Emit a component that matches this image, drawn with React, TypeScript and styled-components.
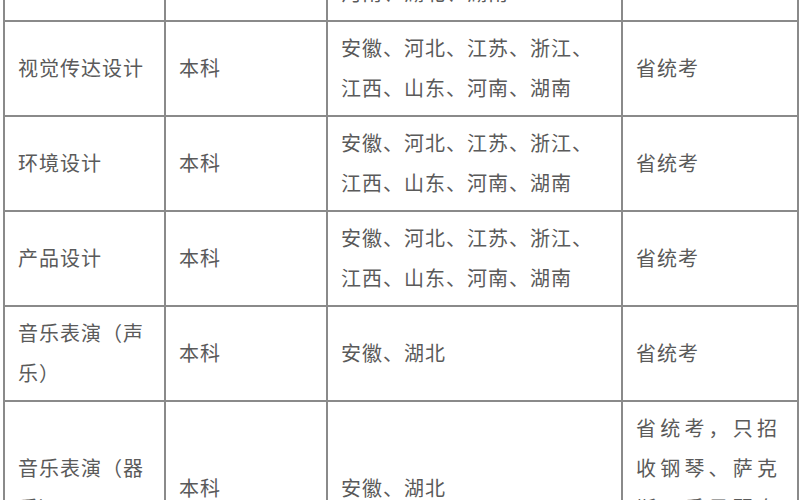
import React from "react";
import styled, { createGlobalStyle } from "styled-components";

const GlobalStyle = createGlobalStyle`
  html, body {
    margin: 0;
    padding: 0;
    background: #ffffff;
    overflow: hidden;
  }
  body {
    font-family: "Noto Sans CJK SC", "Noto Sans", sans-serif;
  }
`;

const Page = styled.div`
  width: 800px;
  height: 500px;
  overflow: hidden;
  padding-left: 3px;
  box-sizing: border-box;
`;

const Table = styled.table`
  border-collapse: collapse;
  table-layout: fixed;
  width: 794px;
  margin-top: -75px;
  color: #5a5a5a;
  font-size: 20px;
  letter-spacing: 1px;
`;

const Cell = styled.td<{ $wide?: boolean }>`
  border: 2px solid #8a8a8a;
  padding: 6px 13px 7px;
  vertical-align: middle;
  line-height: 40px;
  white-space: nowrap;
  letter-spacing: ${props => (props.$wide ? "4.2px" : "1px")};
`;

const Line = styled.div`
  display: block;
`;

type Row = {
  major: string[];
  level: string;
  provinces: string[];
  note: string[];
  wideNote?: boolean;
};

const ROWS: Row[] = [
  {
    major: ["美术学"],
    level: "本科",
    provinces: ["安徽、河北、江苏、浙江、", "河南、湖北、湖南"],
    note: ["省统考"],
  },
  {
    major: ["视觉传达设计"],
    level: "本科",
    provinces: ["安徽、河北、江苏、浙江、", "江西、山东、河南、湖南"],
    note: ["省统考"],
  },
  {
    major: ["环境设计"],
    level: "本科",
    provinces: ["安徽、河北、江苏、浙江、", "江西、山东、河南、湖南"],
    note: ["省统考"],
  },
  {
    major: ["产品设计"],
    level: "本科",
    provinces: ["安徽、河北、江苏、浙江、", "江西、山东、河南、湖南"],
    note: ["省统考"],
  },
  {
    major: ["音乐表演（声", "乐）"],
    level: "本科",
    provinces: ["安徽、湖北"],
    note: ["省统考"],
  },
  {
    major: ["音乐表演（器", "乐）"],
    level: "本科",
    provinces: ["安徽、湖北"],
    note: ["省统考，只招", "收钢琴、萨克", "斯、手风琴专", "业"],
    wideNote: true,
  },
];

const App: React.FC = () => {
  return (
    <Page>
      <GlobalStyle />
      <Table>
        <colgroup>
          <col style={{ width: 161 }} />
          <col style={{ width: 162 }} />
          <col style={{ width: 295 }} />
          <col style={{ width: 176 }} />
        </colgroup>
        <tbody>
          {ROWS.map((row, i) => (
            <tr key={i}>
              <Cell>
                {row.major.map(t => (
                  <Line key={t}>{t}</Line>
                ))}
              </Cell>
              <Cell>{row.level}</Cell>
              <Cell>
                {row.provinces.map(t => (
                  <Line key={t}>{t}</Line>
                ))}
              </Cell>
              <Cell $wide={row.wideNote}>
                {row.note.map(t => (
                  <Line key={t}>{t}</Line>
                ))}
              </Cell>
            </tr>
          ))}
        </tbody>
      </Table>
    </Page>
  );
};

export default App;
